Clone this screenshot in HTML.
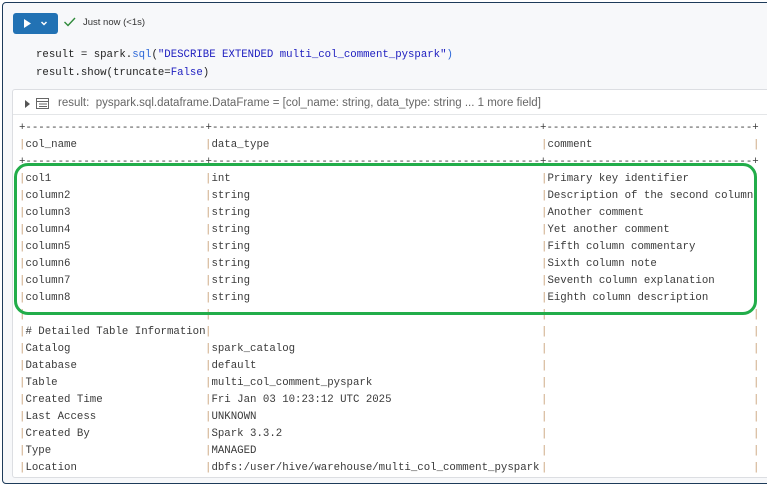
<!DOCTYPE html>
<html><head><meta charset="utf-8"><style>
*{margin:0;padding:0;box-sizing:border-box}
body{width:767px;height:487px;overflow:hidden;background:#fff;font-family:"Liberation Sans",sans-serif;position:relative}
.cell{position:absolute;left:2px;top:2px;width:780px;height:482px;background:#f7f8fa;border:1.5px solid #1d3b5a;border-radius:4px}
.btn{position:absolute;left:10px;top:10px;width:45px;height:21px;background:#2272b4;border-radius:3px}
.mono{font-family:"Liberation Mono","DejaVu Sans Mono",monospace;font-size:10.72px}
.code{position:absolute;left:36px;color:#222;white-space:pre;font-size:10.7px}
.out{position:absolute;left:12px;top:89px;width:770px;height:389px;background:#fff;border:1px solid #dcdee2;border-radius:3px;overflow:hidden}
.hdr{height:25px;border-bottom:1px solid #e4e6e8;font-size:11.5px;color:#666;position:relative}
.t{position:absolute;white-space:pre;color:#3a3a3a;line-height:17px;height:17px}
.p{color:#c9a27a}
.g{position:absolute;left:14px;top:163px;width:743px;height:152px;border:3px solid #22ad4a;border-radius:14px}
</style></head><body>
<div class="cell">
<div class="btn">
<svg width="45" height="21" style="position:absolute;left:0;top:0"><path d="M11 6 L18 10.5 L11 15Z" fill="#fff"/><path d="M28.5 9 L31 11.5 L33.5 9" stroke="#fff" stroke-width="1.5" fill="none"/></svg>
</div>
<svg width="14" height="12" style="position:absolute;left:60px;top:13px"><path d="M1.5 6 L5 9.5 L12 2" stroke="#2f8a3a" stroke-width="1.4" fill="none"/></svg>
<div style="position:absolute;left:80px;top:14px;font-size:9.5px;color:#333">Just now (&lt;1s)</div>
</div>
<div class="code mono" style="top:49px">result = spark.<span style="color:#2d68d8">sql</span>(<span style="color:#2020c0">"DESCRIBE EXTENDED multi_col_comment_pyspark"</span><span style="color:#2d68d8">)</span></div>
<div class="code mono" style="top:67px">result.show(truncate=<span style="color:#2020c0">False</span>)</div>
<div class="out">
<div class="hdr">
<svg width="8" height="8" style="position:absolute;left:11px;top:10px"><path d="M1 0 L6 4 L1 8Z" fill="#555"/></svg>
<svg width="13" height="11" style="position:absolute;left:23px;top:8px"><rect x="0.5" y="0.5" width="12" height="10" fill="none" stroke="#666"/><path d="M0.5 3.5H12.5M3 6H11M3 8.5H11" stroke="#666"/></svg>
<div style="position:absolute;left:45px;top:7px">result:&nbsp; pyspark.sql.dataframe.DataFrame = [col_name: string, data_type: string ... 1 more field]</div>
</div>
</div>
<div class="mono" id="tb"></div>
<div class="g"></div>
<script>
var rows=[['SEP'],['col_name','data_type','comment'],['SEP'],
['col1','int','Primary key identifier'],['column2','string','Description of the second column'],['column3','string','Another comment'],['column4','string','Yet another comment'],['column5','string','Fifth column commentary'],['column6','string','Sixth column note'],['column7','string','Seventh column explanation'],['column8','string','Eighth column description'],
['','',''],['# Detailed Table Information','',''],['Catalog','spark_catalog',''],['Database','default',''],['Table','multi_col_comment_pyspark',''],['Created Time','Fri Jan 03 10:23:12 UTC 2025',''],['Last Access','UNKNOWN',''],['Created By','Spark 3.3.2',''],['Type','MANAGED',''],['Location','dbfs:/user/hive/warehouse/multi_col_comment_pyspark','']];
var xs=[19,205,541,753],h='';
rows.forEach(function(r,i){var y=120+i*17;
if(r[0]=='SEP'){h+='<div class="t" style="left:19px;top:'+y+'px">+'+'-'.repeat(28)+'+'+'-'.repeat(51)+'+'+'-'.repeat(32)+'+</div>';}
else{for(var c=0;c<3;c++)h+='<div class="t" style="left:'+xs[c]+'px;top:'+y+'px"><span class="p">|</span>'+r[c]+'</div>';
h+='<div class="t" style="left:'+xs[3]+'px;top:'+y+'px"><span class="p">|</span></div>';}
});
var tb=document.getElementById('tb');tb.innerHTML=h;tb.style.cssText='position:absolute;left:0;top:0;width:767px;height:476px;overflow:hidden';
</script>
</body></html>
